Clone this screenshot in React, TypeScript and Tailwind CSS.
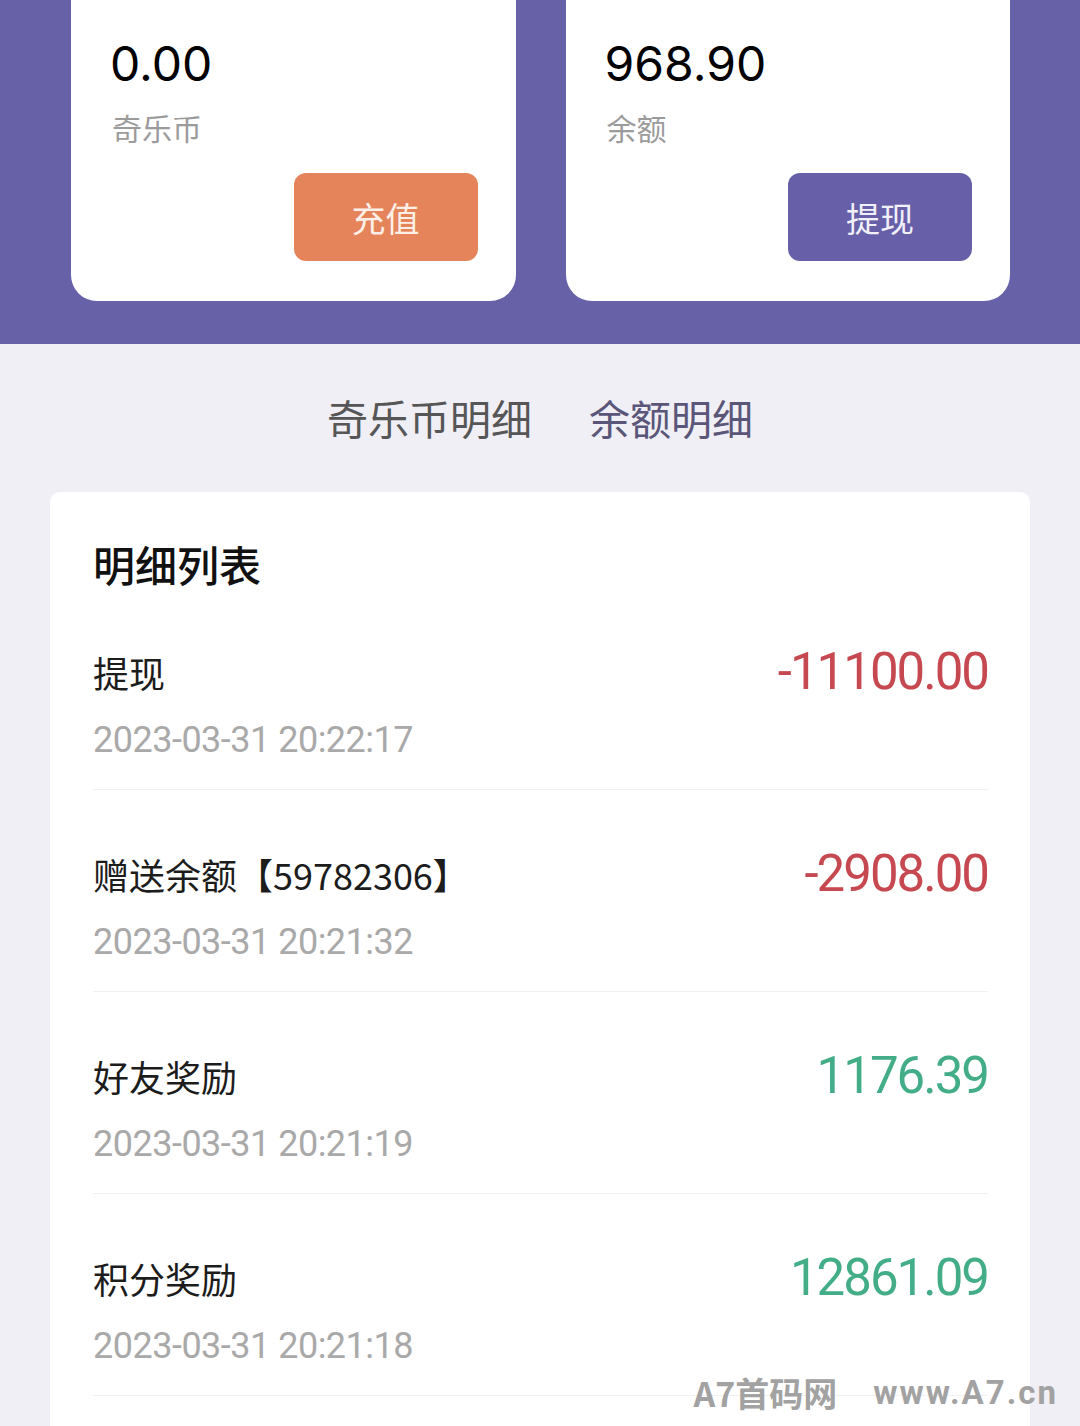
import React from 'react'

type Record = {
    title: string
    amount: string
    time: string
    income: boolean
}

const records: Record[] = [
    { title: '提现', amount: '-11100.00', time: '2023-03-31 20:22:17', income: false },
    { title: '赠送余额【59782306】', amount: '-2908.00', time: '2023-03-31 20:21:32', income: false },
    { title: '好友奖励', amount: '1176.39', time: '2023-03-31 20:21:19', income: true },
    { title: '积分奖励', amount: '12861.09', time: '2023-03-31 20:21:18', income: true },
]

function WalletCard({ value, label, action, tone }: { value: string; label: string; action: string; tone: 'orange' | 'purple' }) {
    return (
        <div className="-mt-6 bg-white rounded-[26px] pt-16 pl-[39px] pr-[38px] pb-10 flex flex-col">
            <div className="font-['Inter','Noto_Sans',sans-serif] text-[48px] leading-[48px] text-black">{value}</div>
            <div className="mt-[24px] pl-[2px] text-[30px] leading-[30px] text-[#9b9b9b]">{label}</div>
            <button
                className={
                    tone === 'orange'
                        ? 'mt-[31px] self-end w-[184px] h-[88px] rounded-[12px] bg-[#e5845a] text-[#fbefe8] text-[34px] flex items-center justify-center'
                        : 'mt-[31px] self-end w-[184px] h-[88px] rounded-[12px] bg-[#6760a8] text-[#f1f0f8] text-[34px] flex items-center justify-center'
                }
            >
                {action}
            </button>
        </div>
    )
}

export default function App() {
    return (
        <div className="relative w-[1080px] h-[1426px] overflow-hidden bg-[#f0eff5] font-['Noto_Sans_CJK_SC','Noto_Sans',sans-serif]">
            {/* Header band */}
            <div className="bg-[#6761a8] grid grid-cols-2 gap-[50px] pl-[71px] pr-[70px] pb-[43px]">
                <WalletCard value="0.00" label="奇乐币" action="充值" tone="orange" />
                <WalletCard value="968.90" label="余额" action="提现" tone="purple" />
            </div>

            {/* Tabs */}
            <div className="flex justify-center gap-[57px] pt-[53px] pb-[55px] text-[41px] leading-[40px]">
                <span className="text-[#565656]">奇乐币明细</span>
                <span className="text-[#5a5679]">余额明细</span>
            </div>

            {/* List */}
            <div className="mx-[50px] bg-white rounded-t-[10px] pt-12 pl-[43px] pr-[42px] pb-10">
                <h2 className="text-[42px] leading-[48px] font-medium text-[#111]">明细列表</h2>
                {records.map((r) => (
                    <div key={r.time} className="pt-[56px] pb-[28px] border-b border-[#f1f1f1]">
                        <div className="flex items-center justify-between h-[56px]">
                            <span className="text-[36px] leading-[56px] text-[#1c1c1c]">{r.title}</span>
                            <span
                                className={
                                    r.income
                                        ? "font-['Roboto',sans-serif] text-[51px] leading-[56px] tracking-[-2px] text-[#43ad88]"
                                        : "font-['Roboto',sans-serif] text-[51px] leading-[56px] tracking-[-2px] text-[#c64850]"
                                }
                            >
                                {r.amount}
                            </span>
                        </div>
                        <div className="mt-[19px] font-['Roboto',sans-serif] text-[36px] leading-[42px] tracking-[-0.5px] text-[#a9a9a9]">
                            {r.time}
                        </div>
                    </div>
                ))}
            </div>

            {/* Watermark */}
            <div className="absolute right-[22px] bottom-[16px] flex items-center gap-[36px] leading-[34px] font-bold text-[#a2a2a2]">
                <span className="text-[34px]">A7首码网</span>
                <span className="font-['Roboto',sans-serif] text-[33px] tracking-[2px]">www.A7.cn</span>
            </div>
        </div>
    )
}
